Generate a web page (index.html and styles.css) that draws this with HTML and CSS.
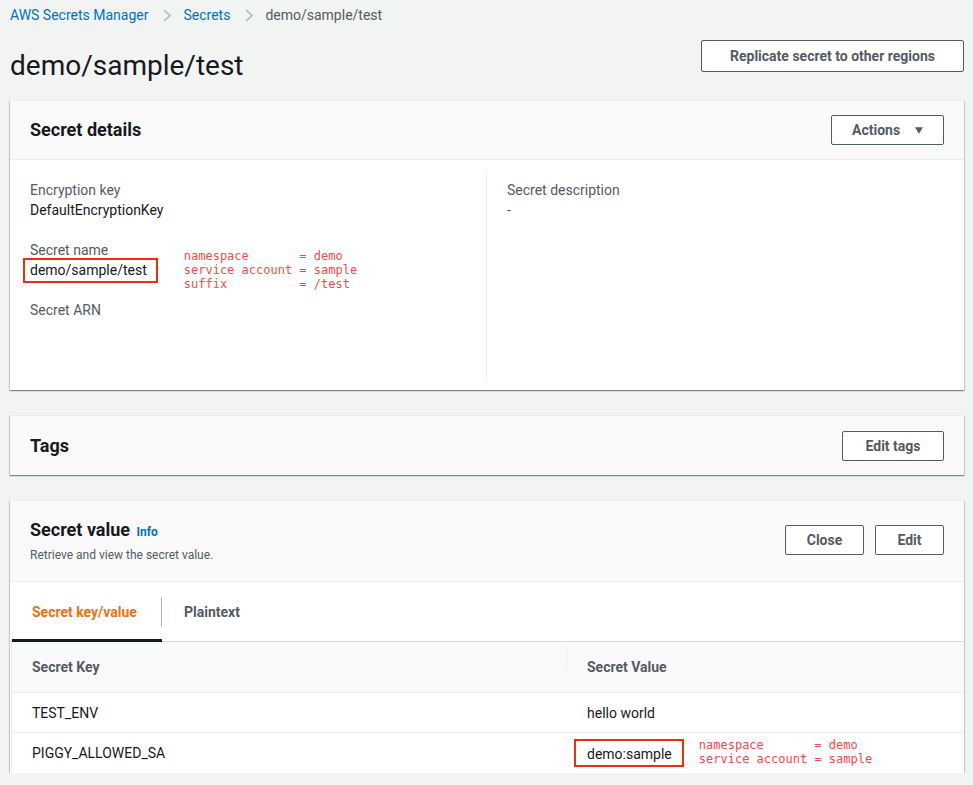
FILE: index.html
```html
<!DOCTYPE html>
<html>
<head>
<meta charset="utf-8">
<link rel="stylesheet" href="styles.css">
</head>
<body>
<div class="page">
  <nav class="crumbs">
    <a class="crumb-link">AWS Secrets Manager</a>
    <svg class="chev" width="8" height="13" viewBox="0 0 8 13"><path d="M1 1l6 5.5L1 12" fill="none" stroke="#aab7b8" stroke-width="1.5"/></svg>
    <a class="crumb-link">Secrets</a>
    <svg class="chev" width="8" height="13" viewBox="0 0 8 13"><path d="M1 1l6 5.5L1 12" fill="none" stroke="#aab7b8" stroke-width="1.5"/></svg>
    <span class="crumb-current">demo/sample/test</span>
  </nav>

  <header class="page-head">
    <h1 class="page-title">demo/sample/test</h1>
    <button class="btn btn-replicate">Replicate secret to other regions</button>
  </header>

  <section class="card">
    <div class="card-head">
      <h2 class="card-title">Secret details</h2>
      <button class="btn btn-actions">Actions <svg class="caret" width="11" height="9" viewBox="0 0 11 9"><path d="M0 0h11L5.5 9z" fill="#545b64"/></svg></button>
    </div>
    <div class="card-body cols">
      <div class="col">
        <div class="field">
          <div class="label">Encryption key</div>
          <div class="value">DefaultEncryptionKey</div>
        </div>
        <div class="field field-row">
          <div>
            <div class="label">Secret name</div>
            <div class="value"><span class="hl hl-name">demo/sample/test</span></div>
          </div>
          <pre class="note note-name">namespace       = demo
service account = sample
suffix          = /test</pre>
        </div>
        <div class="field">
          <div class="label">Secret ARN</div>
        </div>
      </div>
      <div class="col col-right">
        <div class="field">
          <div class="label">Secret description</div>
          <div class="value value-muted">-</div>
        </div>
      </div>
    </div>
  </section>

  <section class="card card-gap">
    <div class="card-head">
      <h2 class="card-title">Tags</h2>
      <button class="btn btn-tags">Edit tags</button>
    </div>
  </section>

  <section class="card card-gap">
    <div class="card-head card-head-tall">
      <div>
        <h2 class="card-title">Secret value <span class="info">Info</span></h2>
        <div class="card-sub">Retrieve and view the secret value.</div>
      </div>
      <div class="btn-group">
        <button class="btn btn-close">Close</button>
        <button class="btn btn-edit">Edit</button>
      </div>
    </div>
    <div class="tabs">
      <div class="tab tab-active">Secret key/value</div>
      <div class="tab-sep"></div>
      <div class="tab">Plaintext</div>
    </div>
    <div class="table">
      <div class="trow thead">
        <div class="cell">Secret Key</div>
        <div class="cell cell-v"><span class="th-sep"></span>Secret Value</div>
      </div>
      <div class="trow">
        <div class="cell">TEST_ENV</div>
        <div class="cell cell-v">hello world</div>
      </div>
      <div class="trow trow-last">
        <div class="cell">PIGGY_ALLOWED_SA</div>
        <div class="cell cell-v cell-hl">
          <span class="hl hl-val">demo:sample</span>
          <pre class="note note-val">namespace       = demo
service account = sample</pre>
        </div>
      </div>
    </div>
  </section>
</div>
</body>
</html>
```

FILE: styles.css
```css
* { box-sizing: border-box; }
html, body { margin: 0; padding: 0; }
body {
  background: #f2f3f3;
  font-family: Roboto, "Liberation Sans", Arial, sans-serif;
  color: #16191f;
  font-size: 14px;
  line-height: 20px;
}
.page {
  padding: 0 9px 0 10px;
  width: 973px;
}
.crumbs {
  display: flex;
  align-items: center;
  height: 30px;
}
.crumb-link { color: #0073bb; }
.chev { margin: 0 12px 0 15px; }
.crumb-current { color: #545b64; }

.page-head {
  display: flex;
  justify-content: space-between;
  align-items: flex-start;
  height: 70px;
}
.page-title {
  margin: 18px 0 0 0;
  font-size: 28px;
  line-height: 36px;
  font-weight: 400;
  color: #16191f;
}
.btn {
  font-family: inherit;
  font-size: 14px;
  font-weight: 700;
  line-height: 20px;
  color: #545b64;
  background: #fff;
  border: 1px solid #545b64;
  border-radius: 2px;
  padding: 0 20px;
  height: 30px;
  cursor: pointer;
}
.btn-replicate {
  margin-top: 10px;
  height: 32px;
  width: 263px;
}
.btn-actions {
  width: 113px;
  display: flex;
  align-items: center;
  justify-content: center;
  gap: 15px;
  height: 30px;
}
.caret { margin-top: 1px; }

.card {
  background: #fff;
  border-top: 1px solid #eaeded;
  box-shadow: 0 1px 1px 0 rgba(0,28,36,.3), 1px 1px 1px 0 rgba(0,28,36,.15), -1px 1px 1px 0 rgba(0,28,36,.15);
  width: 954px;
}
.card-gap { margin-top: 25px; }
.card-head {
  background: #fafafa;
  display: flex;
  justify-content: space-between;
  align-items: center;
  height: 59px;
  padding: 0 20px;
  border-bottom: 1px solid #eaeded;
}
.card-gap .card-head { border-bottom: none; }
.card-head-tall {
  height: 81px;
  align-items: flex-start;
  padding-top: 18px;
  border-bottom: 1px solid #eaeded !important;
}
.card-title {
  margin: 0;
  font-size: 18px;
  line-height: 22px;
  font-weight: 700;
  color: #16191f;
}
.info {
  font-size: 12px;
  font-weight: 700;
  color: #0073bb;
  margin-left: 2px;
}
.card-sub {
  font-size: 12px;
  line-height: 16px;
  color: #545b64;
  margin-top: 4px;
}
.btn-group {
  display: flex;
  gap: 11px;
  margin-top: 6px;
}
.btn-close { width: 79px; padding: 0; }
.btn-edit { width: 69px; padding: 0; }
.btn-tags { width: 102px; padding: 0; }

.cols {
  display: grid;
  grid-template-columns: 476px 1fr;
  padding: 10px 0;
}
.col {
  min-height: 210px;
  padding: 10px 20px;
}
.col-right { border-left: 1px solid #eaeded; }
.field + .field { margin-top: 20px; }
.label { color: #545b64; }
.value { color: #16191f; }
.value-muted { color: #545b64; }
.field-row { display: flex; align-items: flex-start; height: 40px; }
.hl {
  display: inline-block;
  border: 2px solid #e8300f;
  line-height: 20px;
}
.hl-name {
  margin-left: -7px;
  padding: 0 9px 1px 5px;
  margin-top: -2px;
}
.note {
  margin: 0;
  font-family: "DejaVu Sans Mono", "Liberation Mono", monospace;
  font-size: 12px;
  line-height: 14px;
  color: #f74a4a;
}
.note-name { margin: 9px 0 0 26px; }

.tabs {
  display: flex;
  align-items: center;
  height: 60px;
  padding-left: 2px;
  border-bottom: 1px solid #d5dbdb;
}
.tab {
  height: 60px;
  display: flex;
  align-items: center;
  padding: 0 20px;
  font-weight: 700;
  color: #545b64;
  padding-top: 1px;
}
.tab-active {
  color: #ec7211;
  border-bottom: 3px solid #16191f;
  padding-top: 4px;
  width: 150px;
}
.tab-sep {
  width: 1px;
  height: 30px;
  background: #aab7b8;
  margin-left: -1px;
}
.tab-sep + .tab { padding-left: 22px; }
.table {
  margin-left: 1px;
  border-left: 1px solid #eaeded;
}
.trow {
  display: grid;
  grid-template-columns: 554px 1fr;
  height: 40px;
  align-items: center;
  border-bottom: 1px solid #eaeded;
}
.thead {
  height: 51px;
  background: #fafafa;
  font-weight: 700;
  color: #545b64;
}
.trow-last { border-bottom: none; height: 40px; }
.cell { padding-left: 20px; }
.cell-v { position: relative; padding-left: 21px; }
.th-sep {
  position: absolute;
  left: 0;
  top: -12px;
  width: 1px;
  height: 24px;
  background: #eaeded;
}
.cell-hl {
  display: flex;
  align-items: center;
  padding-left: 8px;
}
.hl-val {
  padding: 3px 10px 1px 11px;
}
.note-val { margin-left: 15px; margin-top: -2px; }
```
